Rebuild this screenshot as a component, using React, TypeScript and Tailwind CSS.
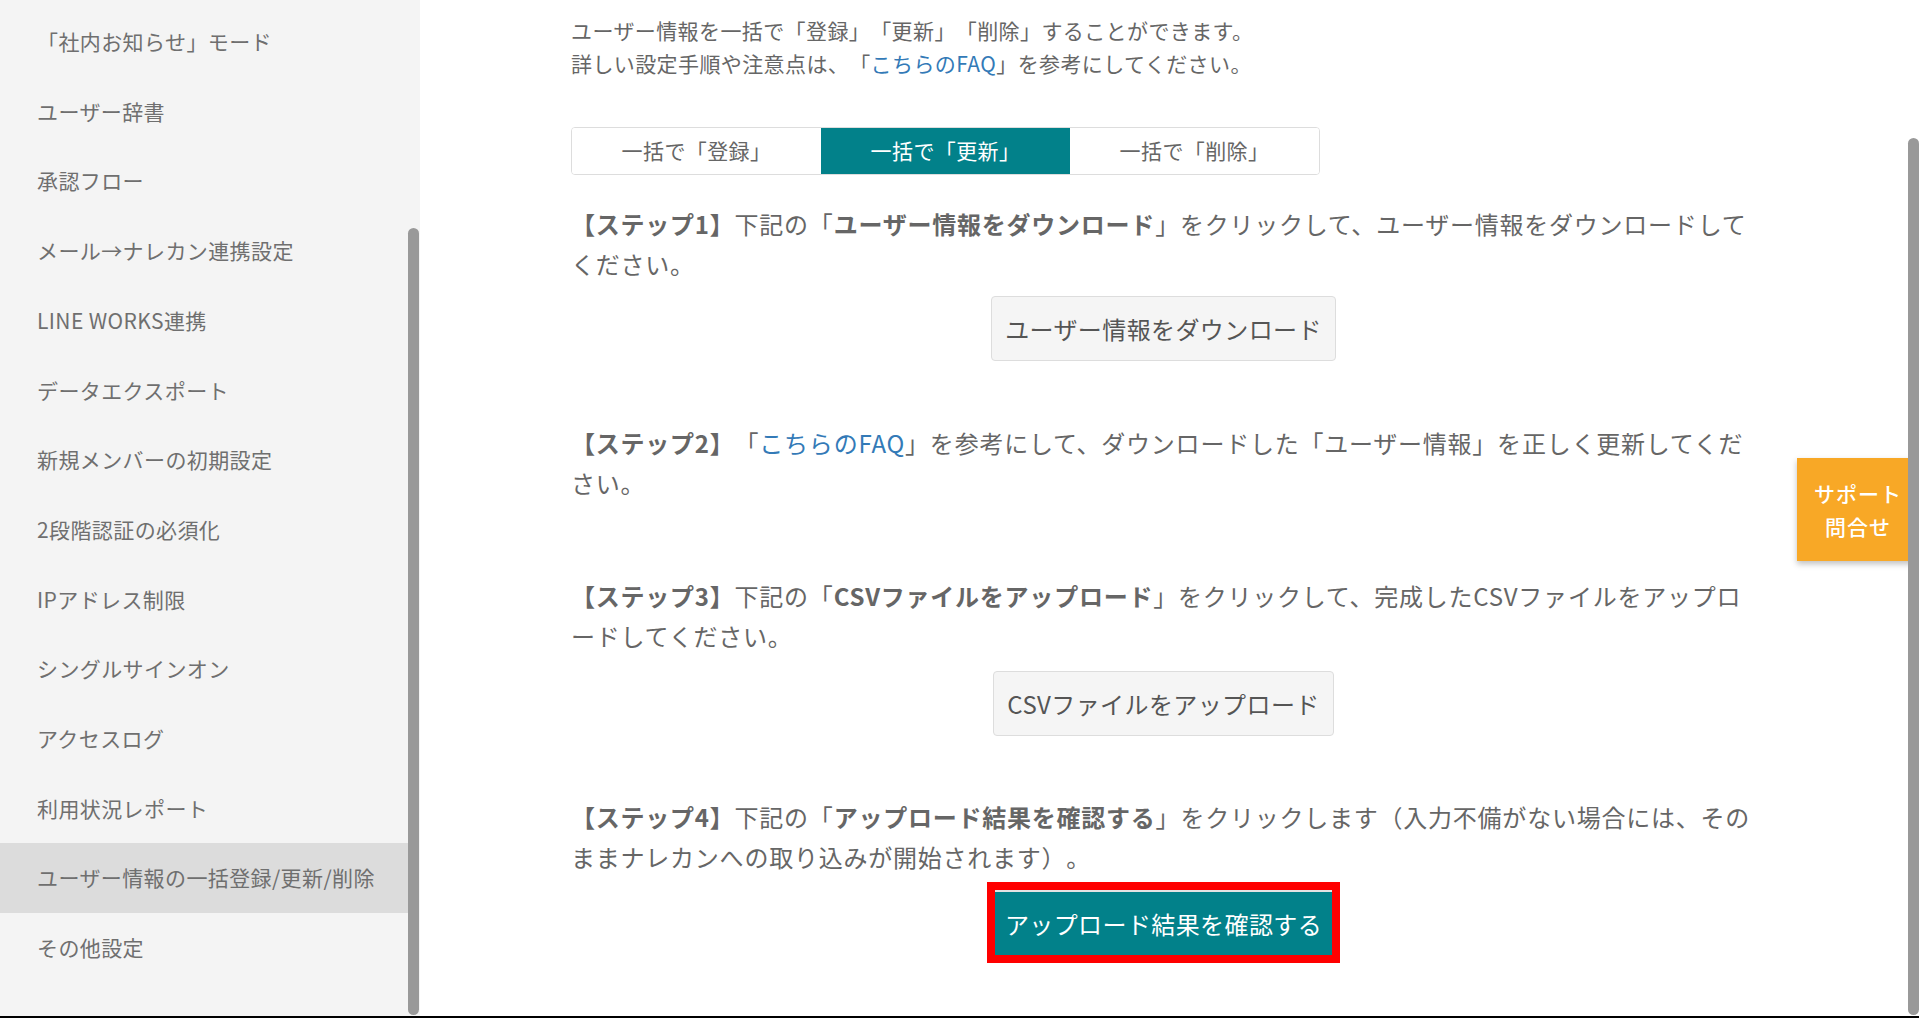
import React from "react";

const menuItems = [
  "「社内お知らせ」モード",
  "ユーザー辞書",
  "承認フロー",
  "メール→ナレカン連携設定",
  "LINE WORKS連携",
  "データエクスポート",
  "新規メンバーの初期設定",
  "2段階認証の必須化",
  "IPアドレス制限",
  "シングルサインオン",
  "アクセスログ",
  "利用状況レポート",
  "ユーザー情報の一括登録/更新/削除",
  "その他設定",
];

const tabs = ["一括で「登録」", "一括で「更新」", "一括で「削除」"];

export default function App() {
  return (
    <div className="w-[1919px] h-[1018px] flex flex-col overflow-hidden bg-white font-['Noto_Sans_CJK_JP','Noto_Sans',sans-serif] [text-spacing-trim:space-all] tracking-[0.025em]">
      <div className="flex flex-1 min-h-0">
        {/* Sidebar */}
        <aside className="relative w-[420px] shrink-0 bg-[#f4f4f4]">
          <ul className="pt-[7px] w-[408px]">
            {menuItems.map((item, i) => (
              <li
                key={item}
                className={
                  "h-[69.7px] flex items-center pl-[37px] text-[21px] text-[#6f6f6f] " +
                  (i === 12 ? "bg-[#dcdcdc]" : "")
                }
              >
                {item}
              </li>
            ))}
          </ul>
          <div className="absolute left-[408px] top-[228px] bottom-[1px] w-[11px] rounded-full bg-[#999999]" />
        </aside>

        {/* Main */}
        <main className="relative flex-1 min-w-0">
          <div className="ml-[151px] w-[1185px] pt-[14px] text-[#666666]">
            <p className="text-[21px] leading-[33px] whitespace-nowrap">
              ユーザー情報を一括で「登録」「更新」「削除」することができます。
              <br />
              詳しい設定手順や注意点は、「<span className="text-[#337ab7]">こちらのFAQ</span>」を参考にしてください。
            </p>

            {/* Tabs */}
            <div className="mt-[47px] w-[749px] h-[48px] grid grid-cols-3 border border-[#dddddd] rounded-[4px] overflow-hidden">
              {tabs.map((t, i) => (
                <div
                  key={t}
                  className={
                    "flex items-center justify-center text-[21px] " +
                    (i === 1 ? "bg-[#02818a] text-white" : "bg-white text-[#666666]")
                  }
                >
                  {t}
                </div>
              ))}
            </div>

            {/* Step 1 */}
            <p className="mt-[29px] text-[24px] leading-[40px] tracking-[0.032em] whitespace-nowrap">
              <b>【ステップ1】</b>下記の「<b>ユーザー情報をダウンロード</b>」をクリックして、ユーザー情報をダウンロードして
              <br />
              ください。
            </p>
            <div className="mt-[12px] flex justify-center">
              <button className="h-[65px] px-[13px] bg-[#f5f5f5] border border-[#dddddd] rounded-[4px] text-[24px] text-[#555555]">
                ユーザー情報をダウンロード
              </button>
            </div>

            {/* Step 2 */}
            <p className="mt-[62px] text-[24px] leading-[40px] tracking-[0.032em] whitespace-nowrap">
              <b>【ステップ2】</b>「<span className="text-[#337ab7]">こちらのFAQ</span>」を参考にして、ダウンロードした「ユーザー情報」を正しく更新してくだ
              <br />
              さい。
            </p>

            {/* Step 3 */}
            <p className="mt-[73px] text-[24px] leading-[40px] tracking-[0.032em] whitespace-nowrap">
              <b>【ステップ3】</b>下記の「<b>CSVファイルをアップロード</b>」をクリックして、完成したCSVファイルをアップロ
              <br />
              ードしてください。
            </p>
            <div className="mt-[15px] flex justify-center">
              <button className="h-[65px] px-[13px] bg-[#f5f5f5] border border-[#dddddd] rounded-[4px] text-[24px] text-[#555555]">
                CSVファイルをアップロード
              </button>
            </div>

            {/* Step 4 */}
            <p className="mt-[61px] text-[24px] leading-[40px] tracking-[0.032em] whitespace-nowrap">
              <b>【ステップ4】</b>下記の「<b>アップロード結果を確認する</b>」をクリックします（入力不備がない場合には、その
              <br />
              ままナレカンへの取り込みが開始されます）。
            </p>
            <div className="mt-[5px] flex justify-center">
              <div className="border-[8px] border-[#ff0000]">
                <button className="h-[65px] px-[10px] bg-[#02818a] border-t-2 border-[#e3e3e3] text-[24px] text-white">
                  アップロード結果を確認する
                </button>
              </div>
            </div>
          </div>

          {/* Support tab (sits under the scrollbar) */}
          <div className="absolute right-0 top-[458px] w-[122px] h-[103px] bg-[#f8a826] shadow-[0_3px_6px_rgba(0,0,0,0.25)] flex flex-col items-center justify-center text-white text-[21px] font-medium tracking-[0.05em] leading-[33px]">
            <span>サポート</span>
            <span>問合せ</span>
          </div>

          {/* Scrollbar */}
          <div className="absolute right-0 top-[138px] bottom-[1px] w-[11px] rounded-full bg-[#999999]" />
        </main>
      </div>
      <div className="h-[2px] bg-black" />
    </div>
  );
}
